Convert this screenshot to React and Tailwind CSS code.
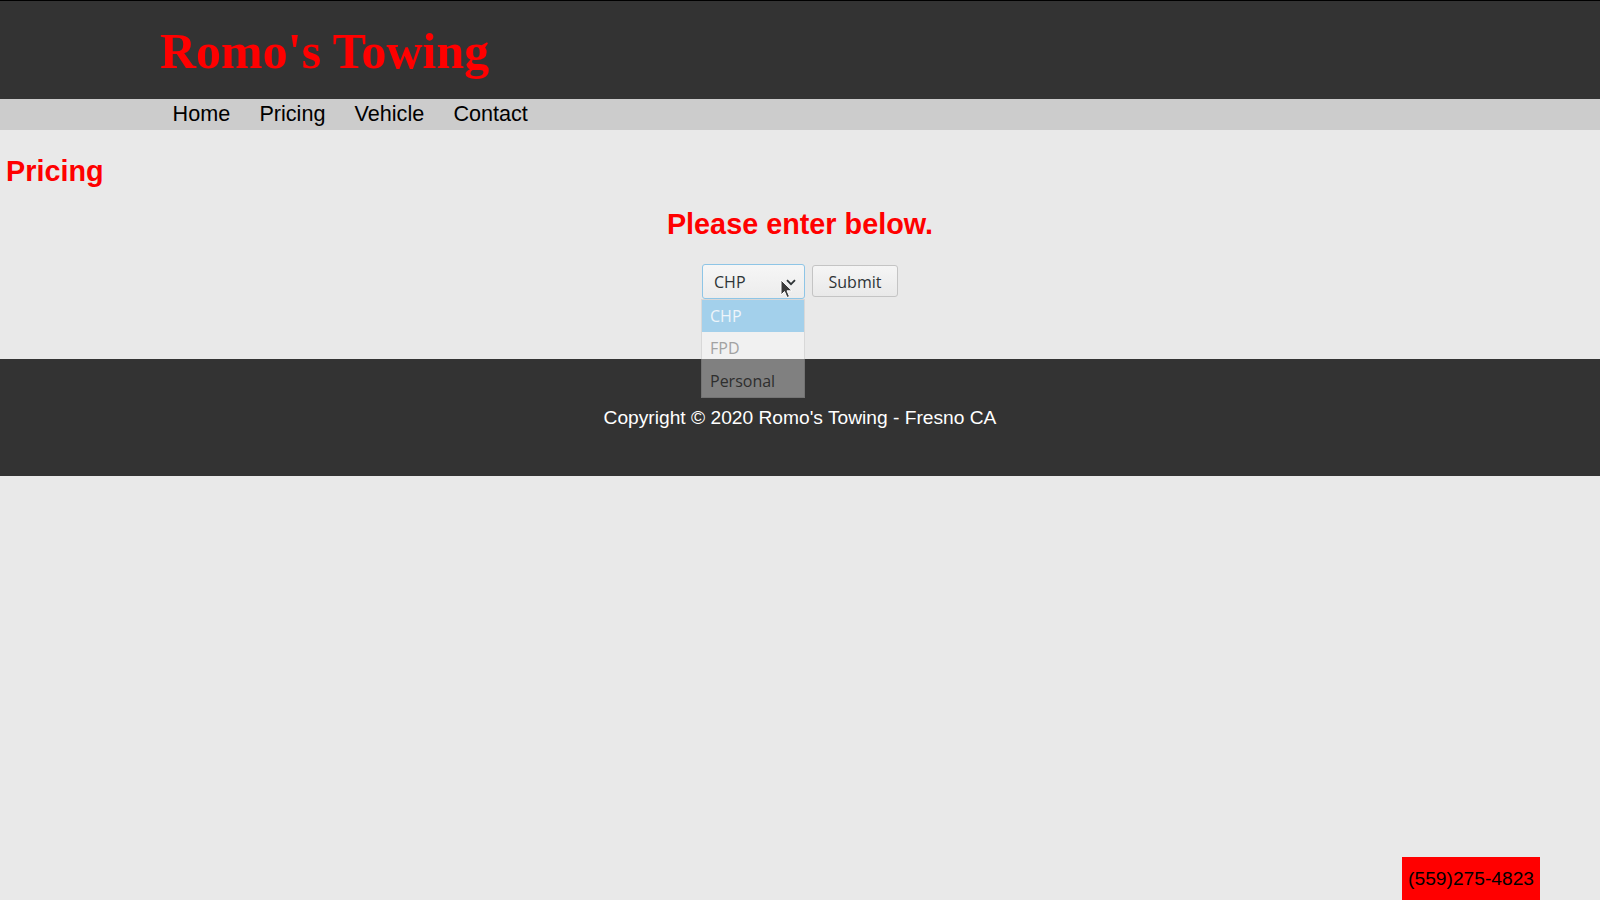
import { useState } from 'react'

const navLinks = ['Home', 'Pricing', 'Vehicle', 'Contact']
const options = ['CHP', 'FPD', 'Personal']

function Cursor() {
  return (
    <svg className="pointer-events-none absolute left-[78px] top-[15px]" width="13" height="20" viewBox="0 0 13 20">
      <path d="M1 1 L1 16 L4.5 12.5 L7 18.5 L9.5 17.5 L7 11.8 L12 11.8 Z" fill="#3a3a3a" stroke="#ffffff" strokeWidth="1" strokeLinejoin="round" />
    </svg>
  )
}

function PricingForm() {
  const [value, setValue] = useState('CHP')

  return (
    <form className="mt-[25px] flex items-center justify-center gap-[7px] font-['Open_Sans','Noto_Sans',sans-serif] text-[16px] text-[#2e3436]" onSubmit={(e) => e.preventDefault()}>
      <div className="relative">
        <div className="flex h-[35px] w-[103px] items-center justify-between rounded-[3px] border border-[#8ec5e6] bg-gradient-to-b from-[#f6f6f6] to-[#ececec] pl-[11px] pr-[8px] pt-[2px]">
          <span>{value}</span>
          <svg width="10" height="7" viewBox="0 0 10 7">
            <path d="M1 1.2 L5 5.2 L9 1.2" fill="none" stroke="#2e3436" strokeWidth="1.8" />
          </svg>
        </div>
        <Cursor />
        <ul className="absolute left-[-1px] top-[35px] z-10 w-[104px] border border-black/10 bg-white/[0.38]">
          {options.map((opt) => (
            <li
              className={`h-[32.5px] pl-[8px] leading-[32px] ${opt === value ? 'bg-[#a3d0eb] text-[#eef5fa]' : opt === 'FPD' ? 'text-[#a2a2a2]' : 'text-[#2e2e2e]'}`}
              key={opt}
              onClick={() => setValue(opt)}
            >
              {opt}
            </li>
          ))}
        </ul>
      </div>
      <button className="h-[32px] w-[86px] rounded-[3px] border border-[#c4c4c4] bg-gradient-to-b from-[#f5f5f5] to-[#e9e9e9] pt-[2px] text-[#2e3436]" type="submit">Submit</button>
    </form>
  )
}

export default function App() {
  return (
    <div className="min-h-[900px] bg-[#e9e9e9] font-['Liberation_Sans',Arial,sans-serif]">
      <header className="h-[99px] border-t border-black bg-[#333333] pl-[160px] pt-[25px]">
        <h1 className="font-['Liberation_Serif','Times_New_Roman',serif] text-[50px] font-bold leading-[50px] text-[#ff0000]">Romo's Towing</h1>
      </header>
      <nav className="flex h-[31px] items-center bg-[#cccccc] pb-[2px] pl-[158px]">
        {navLinks.map((link) => (
          <a className="px-[14.6px] text-[21.6px] leading-[28px] text-black" href="#" key={link}>{link}</a>
        ))}
      </nav>

      <main className="h-[229px] pt-[27px]">
        <h2 className="pl-[6px] text-[28.8px] font-bold leading-[28.8px] text-[#ff0000]">Pricing</h2>
        <h3 className="mt-[24px] text-center text-[28.8px] font-bold leading-[28.8px] text-[#ff0000]">Please enter below.</h3>
        <PricingForm />
      </main>

      <footer className="h-[117px] bg-[#333333] pt-[49px] text-center text-[19.2px] leading-[19.2px] text-white">
        Copyright © 2020 Romo's Towing - Fresno CA
      </footer>

      <div className="fixed bottom-0 right-[60px] h-[43px] bg-[#ff0000] px-[6px] pt-[12px] text-[19.2px] leading-[19.2px] text-black">
        (559)275-4823
      </div>
    </div>
  )
}
